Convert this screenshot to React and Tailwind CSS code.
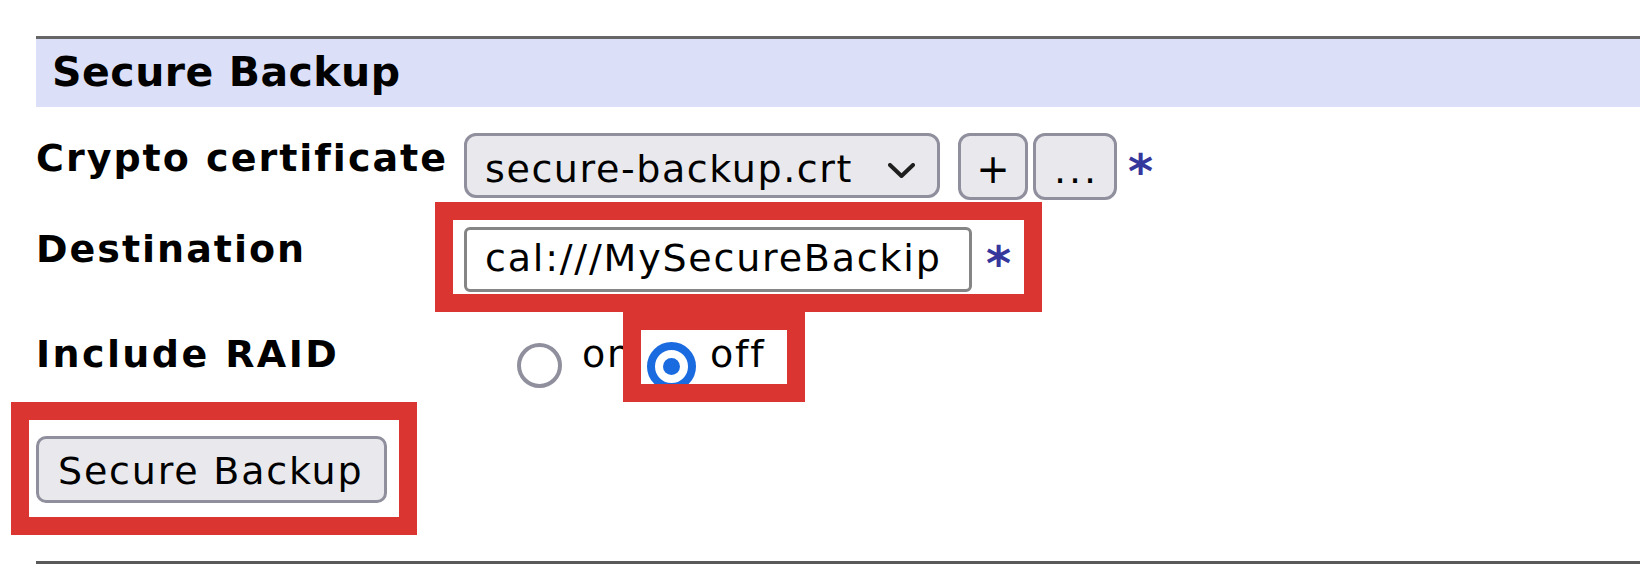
import React from "react";

const F = "font-['DejaVu_Sans',sans-serif]";

function Star({ className = "" }) {
  return (
    <span className={`text-[48px] leading-none font-bold text-[#35379c] ${className}`}>*</span>
  );
}

export default function App() {
  return (
    <div className={`relative w-[1640px] h-[582px] overflow-hidden bg-white text-black ${F}`}>
      <div className="pt-[36px] pl-[36px]">
        {/* Header */}
        <div className="h-[71px] border-t-[3px] border-[#666666] bg-[#dbdff7] pl-[16px] pt-[13px]">
          <div className="text-[41px] leading-none font-bold tracking-[0.5px]">Secure Backup</div>
        </div>

        {/* Row 1 */}
        <div className="mt-[26px] flex items-start">
          <div className="w-[428px] mt-[6px] text-[38px] leading-none font-bold tracking-[2px]">Crypto certificate</div>
          <div className="w-[476px] h-[65px] rounded-[12px] border-[3px] border-[#8f8f9d] bg-[#e9e9ed] flex items-start justify-between pl-[18px] pr-[22px] pt-[14px]">
            <span className="text-[38px] leading-none tracking-[1.6px]">secure-backup.crt</span>
            <svg width="27" height="16" viewBox="0 0 27 16" className="mt-[13px]">
              <polyline points="2,2 13.5,13 25,2" fill="none" stroke="#1f1f1f" strokeWidth="4" strokeLinecap="round" strokeLinejoin="round" />
            </svg>
          </div>
          <div className="ml-[18px] w-[70px] h-[67px] rounded-[12px] border-[3px] border-[#8f8f9d] bg-[#e9e9ed] flex justify-center pt-[13px]">
            <span className="text-[40px] leading-none">+</span>
          </div>
          <div className="ml-[5px] w-[84px] h-[67px] rounded-[12px] border-[3px] border-[#8f8f9d] bg-[#e9e9ed] flex justify-center pt-[15px]">
            <span className="text-[38px] leading-none tracking-[3px] pl-[3px]">...</span>
          </div>
          <Star className="ml-[11px] mt-[14px]" />
        </div>

        {/* Row 2 */}
        <div className="mt-[27px] flex items-start">
          <div className="w-[428px] mt-[3px] text-[38px] leading-none font-bold tracking-[2px]">Destination</div>
          <div className="w-[508px] h-[65px] rounded-[6px] border-[3px] border-[#858585] bg-white pl-[18px] pt-[9px] overflow-hidden whitespace-nowrap">
            <span className="text-[38px] leading-none tracking-[1.8px]">cal:///MySecureBackip</span>
          </div>
          <Star className="ml-[14px] mt-[12px]" />
        </div>

        {/* Row 3 */}
        <div className="mt-[40px] flex items-start">
          <div className="w-[428px] mt-[3px] text-[38px] leading-none font-bold tracking-[2.4px]">Include RAID</div>
          <div className="ml-[53px] mt-[11px] w-[45px] h-[45px] rounded-full border-[4px] border-[#8f8f9d] bg-white" />
          <span className="ml-[20px] mt-[3px] text-[38px] leading-none tracking-[1.8px]">on</span>
          <div className="ml-[14px] mt-[10px] w-[49px] h-[49px] rounded-full border-[8px] border-[#1b6be0] bg-white flex items-center justify-center">
            <div className="w-[17px] h-[17px] rounded-full bg-[#1b6be0]" />
          </div>
          <span className="ml-[14px] mt-[3px] text-[38px] leading-none tracking-[1.8px]">off</span>
        </div>

        {/* Row 4 */}
        <div className="mt-[45px] flex">
          <div className="w-[351px] h-[67px] rounded-[10px] border-[3px] border-[#8f8f9d] bg-[#e9e9ed] pl-[19px] pt-[13px]">
            <span className="text-[38px] leading-none tracking-[1.8px]">Secure Backup</span>
          </div>
        </div>

        {/* Bottom rule */}
        <div className="mt-[58px] h-[3px] bg-[#5a5a5a]" />
      </div>

      {/* Red annotation boxes */}
      <div className="absolute left-[435px] top-[202px] w-[607px] h-[110px] border-[18px] border-[#da3531]" />
      <div className="absolute left-[623px] top-[312px] w-[182px] h-[90px] border-[18px] border-[#da3531]" />
      <div className="absolute left-[11px] top-[402px] w-[406px] h-[133px] border-[18px] border-[#da3531]" />
    </div>
  );
}
